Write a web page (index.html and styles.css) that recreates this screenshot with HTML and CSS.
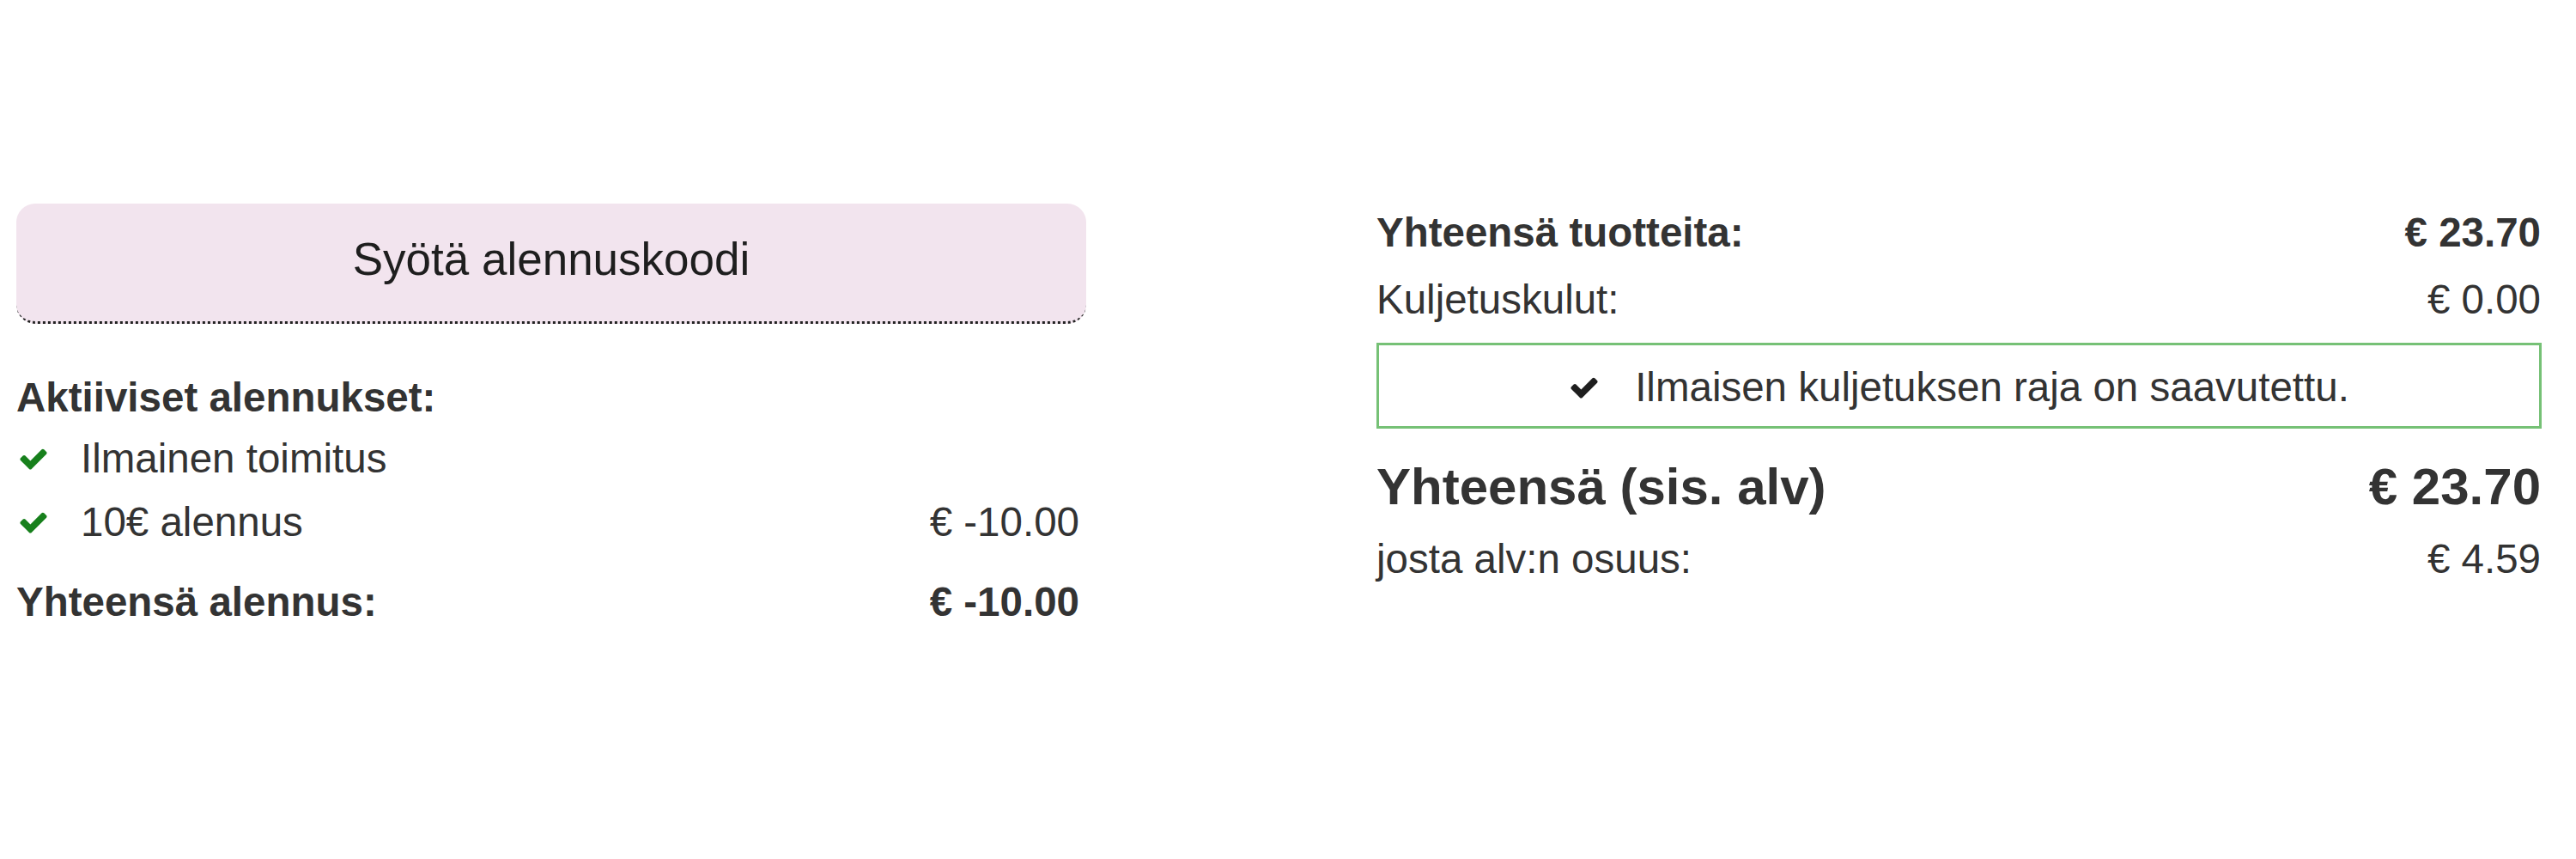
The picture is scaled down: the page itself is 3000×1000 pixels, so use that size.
FILE: index.html
```html
<!DOCTYPE html>
<html lang="fi">
<head>
<meta charset="utf-8">
<title>Ostoskori</title>
<link rel="stylesheet" href="styles.css">
</head>
<body>
<div class="page">
  <section class="col-left">
    <div class="code-btn">Syötä alennuskoodi</div>
    <div class="active-title">Aktiiviset alennukset:</div>
    <div class="row">
      <span class="item"><svg class="check green" viewBox="0 0 1792 1792"><path d="M1671 566q0 40-28 68l-724 724-136 136q-28 28-68 28t-68-28l-136-136-362-362q-28-28-28-68t28-68l136-136q28-28 68-28t68 28l294 295 656-657q28-28 68-28t68 28l136 136q28 28 28 68z"/></svg>Ilmainen toimitus</span>
    </div>
    <div class="row">
      <span class="item"><svg class="check green" viewBox="0 0 1792 1792"><path d="M1671 566q0 40-28 68l-724 724-136 136q-28 28-68 28t-68-28l-136-136-362-362q-28-28-28-68t28-68l136-136q28-28 68-28t68 28l294 295 656-657q28-28 68-28t68 28l136 136q28 28 28 68z"/></svg>10€ alennus</span>
      <span>€ -10.00</span>
    </div>
    <div class="row bold total-discount">
      <span>Yhteensä alennus:</span>
      <span>€ -10.00</span>
    </div>
  </section>
  <section class="col-right">
    <div class="row bold">
      <span>Yhteensä tuotteita:</span>
      <span>€ 23.70</span>
    </div>
    <div class="row shipping">
      <span>Kuljetuskulut:</span>
      <span>€ 0.00</span>
    </div>
    <div class="free-box"><svg class="check dark" viewBox="0 0 1792 1792"><path d="M1671 566q0 40-28 68l-724 724-136 136q-28 28-68 28t-68-28l-136-136-362-362q-28-28-28-68t28-68l136-136q28-28 68-28t68 28l294 295 656-657q28-28 68-28t68 28l136 136q28 28 28 68z"/></svg>Ilmaisen kuljetuksen raja on saavutettu.</div>
    <div class="row grand">
      <span>Yhteensä (sis. alv)</span>
      <span>€ 23.70</span>
    </div>
    <div class="row vat">
      <span>josta alv:n osuus:</span>
      <span>€ 4.59</span>
    </div>
  </section>
</div>
</body>
</html>
```
FILE: styles.css
```css
html, body {
  margin: 0;
  padding: 0;
  background: #ffffff;
}

body {
  font-family: "Liberation Sans", Arial, sans-serif;
  color: #333333;
  font-size: 47.5px;
}

.page {
  display: grid;
  grid-template-columns: 1246px 1357px;
  justify-content: space-between;
  padding: 0 40px 0 19px;
  width: 3000px;
  box-sizing: border-box;
}

.col-left {
  padding-top: 237px;
}

.col-right {
  padding-top: 235px;
}

.code-btn {
  box-sizing: border-box;
  height: 140px;
  padding-bottom: 8px;
  line-height: 129px;
  text-align: center;
  font-size: 53px;
  color: #1e1e1e;
  background: #f2e4ee;
  border-radius: 22px;
  border-bottom: 3px dotted #222222;
}

.active-title {
  margin-top: 52px;
  line-height: 68px;
  font-weight: bold;
}

.row {
  display: flex;
  justify-content: space-between;
  line-height: 74px;
  padding-right: 8px;
}

.col-right .row {
  padding-right: 1px;
  line-height: 72px;
}

.bold {
  font-weight: bold;
}

.item {
  display: flex;
  align-items: center;
}

.check {
  width: 36px;
  height: 36px;
  flex: none;
}

.check.green {
  fill: #17801c;
  margin: 0 37px 0 2px;
}

.check.dark {
  fill: #1e1e1e;
  margin-right: 41px;
}

.total-discount {
  margin-top: 20px;
  line-height: 72px;
}

.col-right .shipping {
  line-height: 84px;
}

.free-box {
  box-sizing: border-box;
  margin-top: 8px;
  height: 100px;
  padding: 13px 0 9px;
  line-height: 72px;
  border: 3px solid #76c176;
  display: flex;
  justify-content: center;
  align-items: center;
}

.col-right .grand {
  margin-top: 28px;
  line-height: 80px;
  font-size: 60px;
  font-weight: bold;
}

.col-right .vat {
  margin-top: 8px;
}
```
